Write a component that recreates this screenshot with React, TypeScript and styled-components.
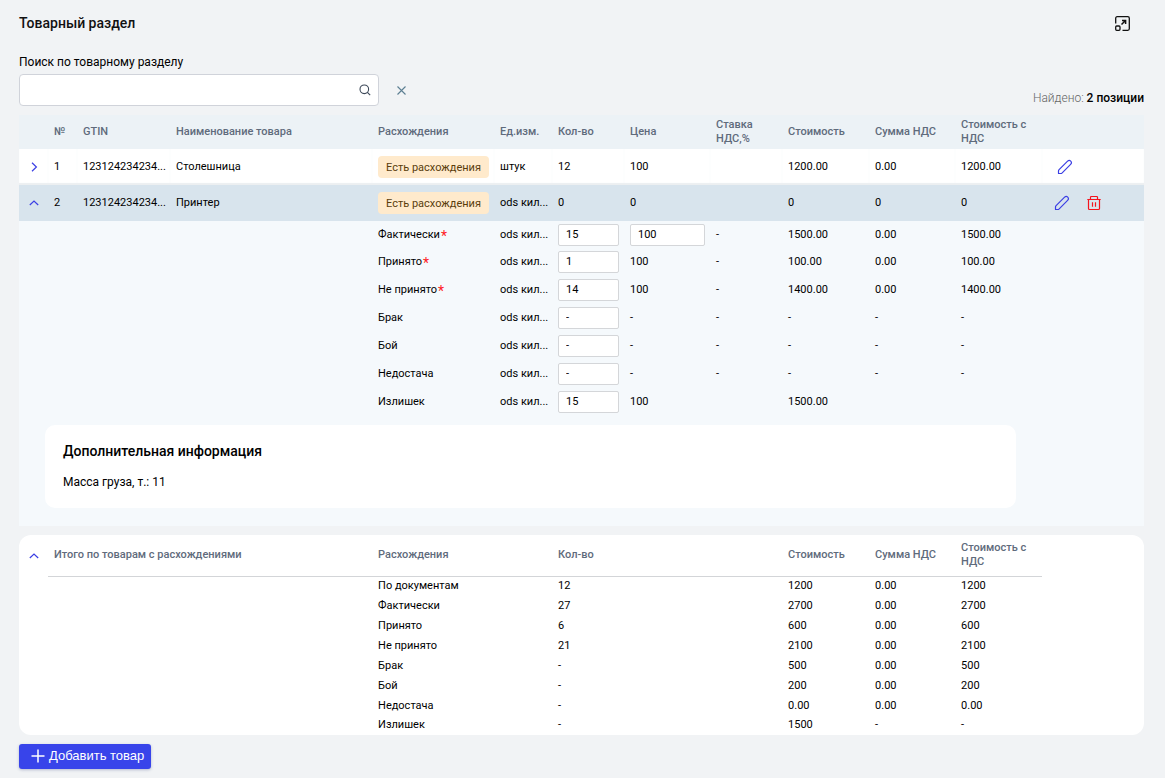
import React, { useState } from "react";
import styled, { createGlobalStyle } from "styled-components";

const GlobalStyle = createGlobalStyle`
  *, *::before, *::after { box-sizing: border-box; }
  body {
    margin: 0;
    background: #f1f3f5;
    color: #000;
    font-family: Roboto, "Liberation Sans", sans-serif;
    font-size: 11px;
  }
  button, input { font: inherit; color: inherit; }
`;

const Page = styled.main`
  padding: 13px 21px 9px 19px;
`;

const TopBar = styled.header`
  display: flex;
  align-items: center;
  justify-content: space-between;
  padding-right: 14px;
`;

const Title = styled.h1`
  margin: 0;
  font-size: 14px;
  line-height: 20px;
  font-weight: 500;
  color: #111;
`;

const IconButton = styled.button<{ $color?: string }>`
  display: inline-flex;
  align-items: center;
  justify-content: center;
  vertical-align: middle;
  padding: 0;
  border: 0;
  background: none;
  cursor: pointer;
  color: ${(p) => p.$color ?? "#3b3fe4"};
`;

const SearchArea = styled.div`
  display: flex;
  align-items: flex-end;
  justify-content: space-between;
  margin-top: 21px;
  padding-bottom: 9px;
`;

const SearchGroup = styled.div`
  display: flex;
  flex-direction: column;
`;

const SearchLabel = styled.label`
  font-size: 12px;
  line-height: 16px;
  margin-bottom: 4px;
`;

const SearchRow = styled.div`
  display: flex;
  align-items: center;
  gap: 17px;
`;

const SearchBox = styled.div`
  display: flex;
  align-items: center;
  width: 360px;
  height: 32px;
  padding: 0 7px;
  background: #fff;
  border: 1px solid #d0d3da;
  border-radius: 4px;
`;

const SearchInput = styled.input`
  flex: 1;
  min-width: 0;
  border: 0;
  outline: 0;
  background: none;
  font-size: 12px;
`;

const Found = styled.p`
  margin: 0;
  font-size: 12px;
  line-height: 16px;
  font-weight: 300;
  color: #666;
  strong { font-weight: 500; color: #000; }
`;

const Grid = styled.table`
  width: 100%;
  table-layout: fixed;
  border-collapse: separate;
  border-spacing: 0;
`;

const Cell = styled.td`
  padding: 0 0 0 6px;
  line-height: 14px;
  white-space: nowrap;
`;

const HeadCell = styled.th`
  padding: 0 6px;
  text-align: left;
  font-weight: 500;
  line-height: 14px;
  color: #5f6b7c;
`;

const HeadRow = styled.tr`
  height: 34px;
  background: #ecf2f6;
`;

const ItemRow = styled.tr<{ $active?: boolean }>`
  height: 36px;
  background: ${(p) => (p.$active ? "#d8e4ed" : "#fff")};
  & > td { box-shadow: ${(p) => (p.$active ? "none" : "inset 0 -2px 1px #eceff1")}; }
`;

const ToggleCell = styled(Cell)`
  padding: 0;
  text-align: center;
`;

const Badge = styled.span`
  display: flex;
  align-items: center;
  justify-content: center;
  width: 111px;
  height: 22px;
  padding-top: 1px;
  border-radius: 4px;
  background: #ffeacc;
  color: #5a3d0c;
`;

const Actions = styled.div<{ $inset: number }>`
  display: flex;
  gap: 17px;
  padding-left: ${(p) => p.$inset}px;
`;

const DetailRow = styled.tr<{ $first?: boolean }>`
  height: ${(p) => (p.$first ? 27 : 28)}px;
  background: #f5f9fc;
`;

const Required = styled.span`
  margin-left: 1px;
  color: #ff1a24;
  font-size: 14px;
  line-height: 10px;
  vertical-align: -3px;
`;

const Field = styled.input`
  display: block;
  width: 100%;
  height: 22px;
  padding: 0 7px 1px;
  border: 1px solid #d4d6d9;
  border-radius: 2px;
  background: #fff;
`;

const FieldCell = styled.td`
  padding: 0 5px 0 6px;
`;

const InfoCell = styled.td`
  padding: 9px 128px 18px 26px;
  background: #f5f9fc;
`;

const InfoCard = styled.section`
  padding: 17px 18px 16px;
  min-height: 83px;
  border-radius: 10px;
  background: #fff;
`;

const InfoTitle = styled.h2`
  margin: 0;
  font-size: 14px;
  line-height: 18px;
  font-weight: 500;
`;

const InfoText = styled.p`
  margin: 14px 0 0;
  font-size: 12px;
  line-height: 16px;
`;

const TotalsCard = styled.section`
  margin-top: 9px;
  border-radius: 12px;
  background: #fff;
  overflow: hidden;
`;

const TotalsHeadRow = styled.tr`
  height: 42px;
  & > th { border-bottom: 1px solid #d3d5d8; padding-bottom: 2px; }
`;

const TotalsCell = styled.td`
  padding: 1px 6px 3px;
  line-height: 16px;
  tr:last-child > & { padding: 0 6px 2px; }
`;

const AddButton = styled.button`
  display: flex;
  align-items: center;
  gap: 4px;
  height: 25px;
  margin-top: 9px;
  padding: 0 7px 2px 12px;
  border: 0;
  border-radius: 3px;
  background: #3844ea;
  color: #fff;
  font-size: 13px;
  font-family: "Liberation Sans", sans-serif;
  box-shadow: 0 1px 3px rgba(40, 50, 120, 0.3);
  cursor: pointer;
`;

const COLUMN_WIDTHS = [29, 29, 93, 202, 122, 58, 72, 86, 72, 87, 86, 87, 102];

const Columns = () => (
  <colgroup>
    {COLUMN_WIDTHS.map((w, i) => (
      <col key={i} width={w} />
    ))}
  </colgroup>
);

const ExpandIcon = () => (
  <svg width="15" height="15" viewBox="0 0 15 15" fill="none" stroke="currentColor" strokeWidth="1.300">
    <path d="M.7 7.500V2.200C.7 1.300 1.300.7 2.200.7h10.600c.9 0 1.500.6 1.500 1.500v10.600c0 .9-.6 1.500-1.500 1.500H7.500" />
    <rect x=".7" y="10" width="4.300" height="4.300" rx="1" />
    <path d="M6.500 8.500l4-4M7 4.400h3.600V8" strokeWidth="1.500" />
  </svg>
);

const SearchIcon = () => (
  <svg width="12" height="12" viewBox="0 0 12 12" fill="none" stroke="#3c4858" strokeWidth="1.100">
    <circle cx="5.300" cy="5.300" r="4.300" />
    <path d="M8.400 8.400l2.800 2.800" />
  </svg>
);

const CloseIcon = () => (
  <svg width="11" height="11" viewBox="0 0 11 11" fill="none" stroke="currentColor" strokeWidth="1.100">
    <path d="M1.500 1.500l8 8M9.500 1.500l-8 8" />
  </svg>
);

const Chevron = ({ up }: { up?: boolean }) => (
  <svg width="10" height="10" viewBox="0 0 10 10" fill="none" stroke="currentColor" strokeWidth="1.200">
    <path d={up ? "M.8 7L5 3l4.200 4" : "M3 .8L7.400 5 3 9.200"} />
  </svg>
);

const PencilIcon = () => (
  <svg width="16" height="16" viewBox="0 0 16 16" fill="none" stroke="currentColor" strokeWidth="1.200" strokeLinejoin="round">
    <path d="M1.500 14.500v-2.400c0-.6.200-1 .6-1.400L10.600 2.200c1-1 2.200-1 3.100-.1.900.9.900 2.200-.1 3.200l-8.400 8.500c-.4.400-.8.700-1.400.7z" />
  </svg>
);

const TrashIcon = () => (
  <svg width="14" height="16" viewBox="0 0 14 16" fill="none" stroke="currentColor" strokeWidth="1.200">
    <path d="M.3 4.500h13.400M3.500 4.500V2.300c0-.5.300-.8.800-.8h5.400c.5 0 .8.300.8.800v2.200M1.500 4.500v9c0 .6.400 1 1 1h9c.6 0 1-.4 1-1v-9M5.500 7.300v4.500M8.500 7.300v4.500" />
  </svg>
);

const PlusIcon = () => (
  <svg width="14" height="14" viewBox="0 0 14 14" fill="none" stroke="currentColor" strokeWidth="1.500">
    <path d="M7 .5v13M.5 7h13" />
  </svg>
);

type Detail = {
  name: string;
  required?: boolean;
  qty: string;
  price: string;
  priceEditable?: boolean;
  rest: string[];
};

const details: Detail[] = [
  { name: "Фактически", required: true, qty: "15", price: "100", priceEditable: true, rest: ["-", "1500.00", "0.00", "1500.00"] },
  { name: "Принято", required: true, qty: "1", price: "100", rest: ["-", "100.00", "0.00", "100.00"] },
  { name: "Не принято", required: true, qty: "14", price: "100", rest: ["-", "1400.00", "0.00", "1400.00"] },
  { name: "Брак", qty: "-", price: "-", rest: ["-", "-", "-", "-"] },
  { name: "Бой", qty: "-", price: "-", rest: ["-", "-", "-", "-"] },
  { name: "Недостача", qty: "-", price: "-", rest: ["-", "-", "-", "-"] },
  { name: "Излишек", qty: "15", price: "100", rest: ["", "1500.00", "", ""] },
];

const totals = [
  ["По документам", "12", "1200", "0.00", "1200"],
  ["Фактически", "27", "2700", "0.00", "2700"],
  ["Принято", "6", "600", "0.00", "600"],
  ["Не принято", "21", "2100", "0.00", "2100"],
  ["Брак", "-", "500", "0.00", "500"],
  ["Бой", "-", "200", "0.00", "200"],
  ["Недостача", "-", "0.00", "0.00", "0.00"],
  ["Излишек", "-", "1500", "-", "-"],
];

const HEADINGS = [
  "№", "GTIN", "Наименование товара", "Расхождения", "Ед.изм.", "Кол-во",
  "Цена", "Ставка НДС,%", "Стоимость", "Сумма НДС", "Стоимость с НДС",
];

export default function App() {
  const [query, setQuery] = useState("");

  return (
    <>
      <GlobalStyle />
      <Page>
        <TopBar>
          <Title>Товарный раздел</Title>
          <IconButton $color="#111" aria-label="Развернуть">
            <ExpandIcon />
          </IconButton>
        </TopBar>

        <SearchArea>
          <SearchGroup>
            <SearchLabel htmlFor="goods-search">Поиск по товарному разделу</SearchLabel>
            <SearchRow>
              <SearchBox>
                <SearchInput id="goods-search" value={query} onChange={(e) => setQuery(e.target.value)} />
                <IconButton aria-label="Найти">
                  <SearchIcon />
                </IconButton>
              </SearchBox>
              <IconButton $color="#5d7f92" aria-label="Очистить" onClick={() => setQuery("")}>
                <CloseIcon />
              </IconButton>
            </SearchRow>
          </SearchGroup>
          <Found>
            Найдено: <strong>2 позиции</strong>
          </Found>
        </SearchArea>

        <Grid>
          <Columns />
          <thead>
            <HeadRow>
              <td />
              {HEADINGS.map((h) => (
                <HeadCell key={h} scope="col">{h}</HeadCell>
              ))}
              <td />
            </HeadRow>
          </thead>
          <tbody>
            <ItemRow>
              <ToggleCell>
                <IconButton aria-label="Развернуть строку" aria-expanded={false}>
                  <Chevron />
                </IconButton>
              </ToggleCell>
              <Cell>1</Cell>
              <Cell>123124234234...</Cell>
              <Cell>Столешница</Cell>
              <Cell><Badge>Есть расхождения</Badge></Cell>
              <Cell>штук</Cell>
              <Cell>12</Cell>
              <Cell>100</Cell>
              <Cell />
              <Cell>1200.00</Cell>
              <Cell>0.00</Cell>
              <Cell>1200.00</Cell>
              <td>
                <Actions $inset={14}>
                  <IconButton aria-label="Изменить"><PencilIcon /></IconButton>
                </Actions>
              </td>
            </ItemRow>
            <ItemRow $active>
              <ToggleCell>
                <IconButton aria-label="Свернуть строку" aria-expanded>
                  <Chevron up />
                </IconButton>
              </ToggleCell>
              <Cell>2</Cell>
              <Cell>123124234234...</Cell>
              <Cell>Принтер</Cell>
              <Cell><Badge>Есть расхождения</Badge></Cell>
              <Cell>ods кил...</Cell>
              <Cell>0</Cell>
              <Cell>0</Cell>
              <Cell />
              <Cell>0</Cell>
              <Cell>0</Cell>
              <Cell>0</Cell>
              <td>
                <Actions $inset={11}>
                  <IconButton aria-label="Изменить"><PencilIcon /></IconButton>
                  <IconButton $color="#f5141e" aria-label="Удалить"><TrashIcon /></IconButton>
                </Actions>
              </td>
            </ItemRow>
            {details.map((d, row) => (
              <DetailRow key={d.name} $first={row === 0}>
                <td colSpan={4} />
                <Cell>
                  {d.name}
                  {d.required && <Required>*</Required>}
                </Cell>
                <Cell>ods кил...</Cell>
                <FieldCell>
                  <Field defaultValue={d.qty} aria-label={`${d.name}: Кол-во`} />
                </FieldCell>
                {d.priceEditable ? (
                  <FieldCell>
                    <Field defaultValue={d.price} aria-label={`${d.name}: Цена`} />
                  </FieldCell>
                ) : (
                  <Cell>{d.price}</Cell>
                )}
                {d.rest.map((v, i) => (
                  <Cell key={i}>{v}</Cell>
                ))}
                <td />
              </DetailRow>
            ))}
            <tr>
              <InfoCell colSpan={13}>
                <InfoCard>
                  <InfoTitle>Дополнительная информация</InfoTitle>
                  <InfoText>Масса груза, т.: 11</InfoText>
                </InfoCard>
              </InfoCell>
            </tr>
          </tbody>
        </Grid>

        <TotalsCard>
          <Grid>
            <Columns />
            <thead>
              <TotalsHeadRow>
                <ToggleCell>
                  <IconButton aria-label="Свернуть итоги" aria-expanded>
                    <Chevron up />
                  </IconButton>
                </ToggleCell>
                <HeadCell scope="col" colSpan={3}>Итого по товарам с расхождениями</HeadCell>
                <HeadCell scope="col" colSpan={2}>Расхождения</HeadCell>
                <HeadCell scope="col" colSpan={3}>Кол-во</HeadCell>
                <HeadCell scope="col">Стоимость</HeadCell>
                <HeadCell scope="col">Сумма НДС</HeadCell>
                <HeadCell scope="col">Стоимость с НДС</HeadCell>
                <td />
              </TotalsHeadRow>
            </thead>
            <tbody>
              {totals.map(([name, qty, cost, vat, full]) => (
                <tr key={name}>
                  <td colSpan={4} />
                  <TotalsCell colSpan={2}>{name}</TotalsCell>
                  <TotalsCell colSpan={3}>{qty}</TotalsCell>
                  <TotalsCell>{cost}</TotalsCell>
                  <TotalsCell>{vat}</TotalsCell>
                  <TotalsCell>{full}</TotalsCell>
                  <td />
                </tr>
              ))}
            </tbody>
          </Grid>
        </TotalsCard>

        <AddButton type="button">
          <PlusIcon />
          Добавить товар
        </AddButton>
      </Page>
    </>
  );
}
